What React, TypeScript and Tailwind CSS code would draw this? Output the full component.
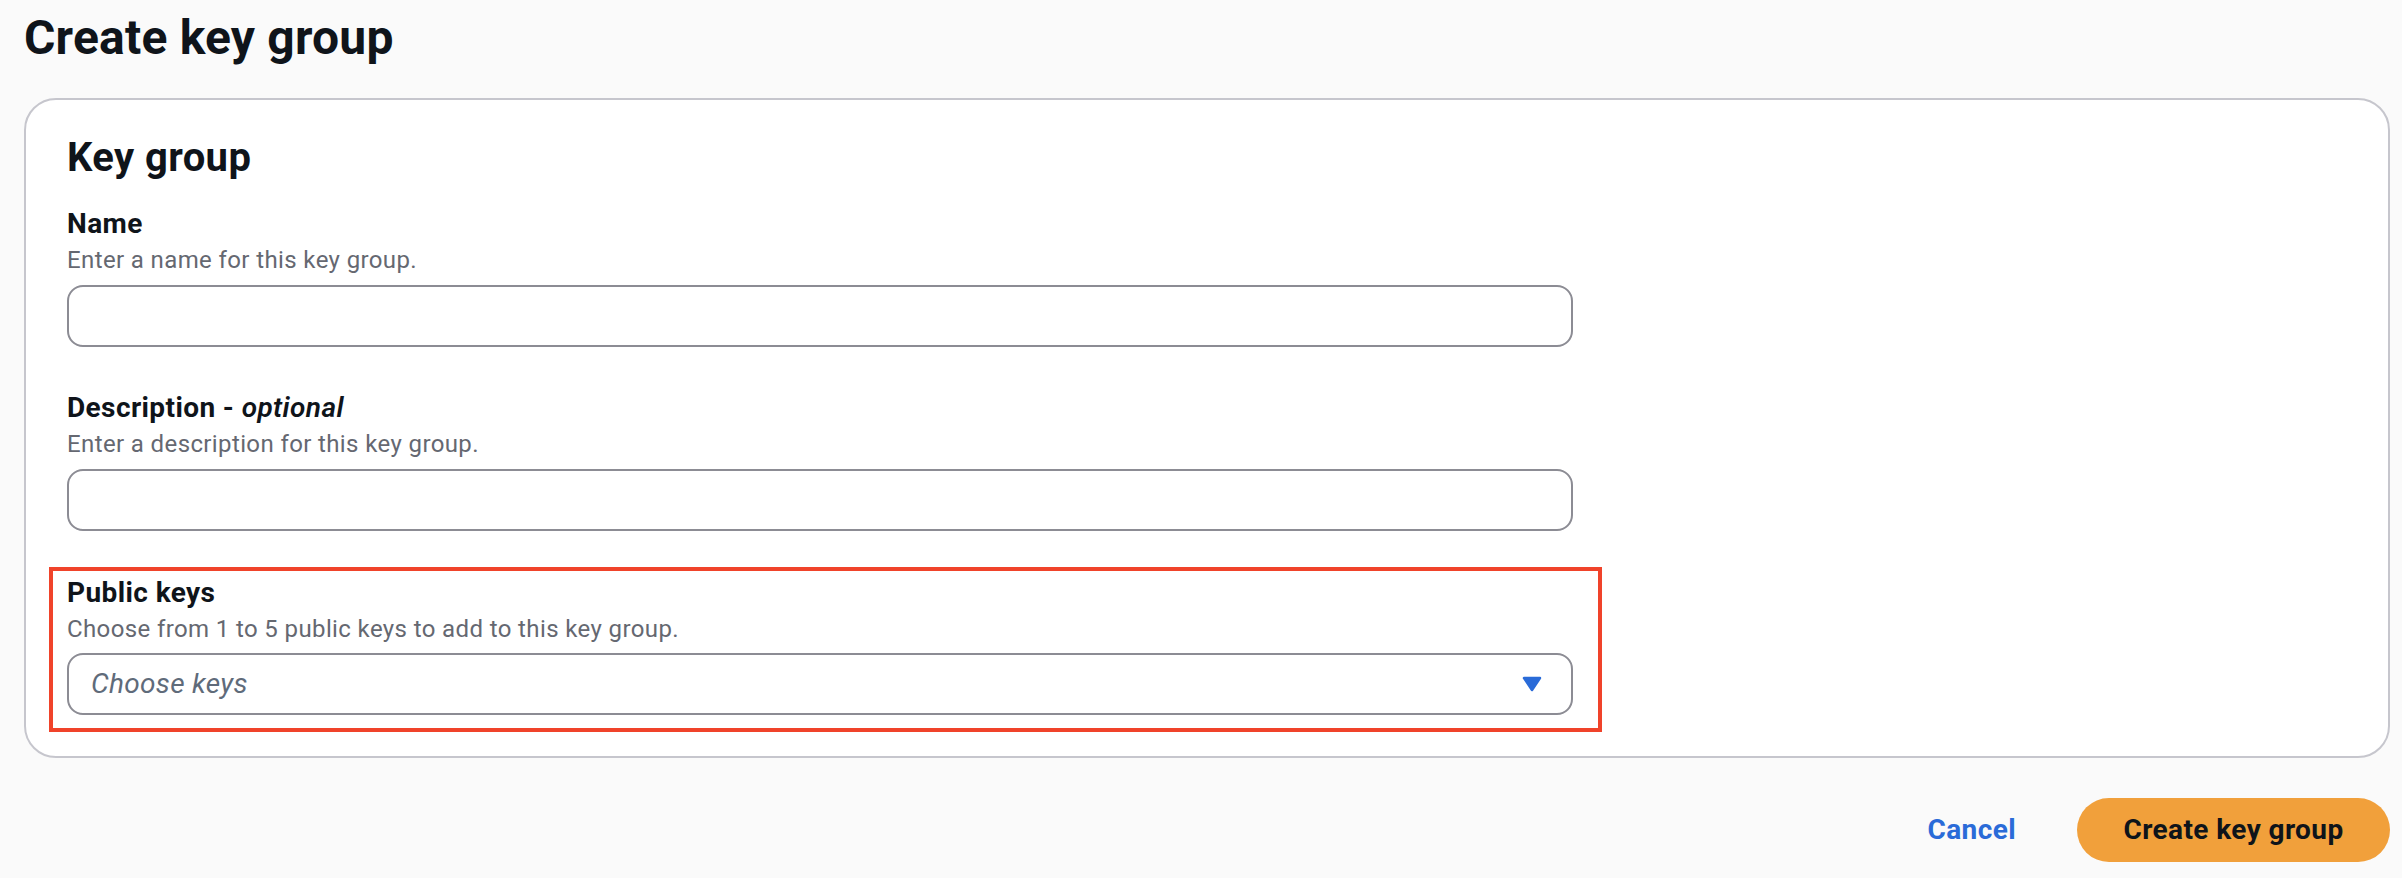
import React from "react";

const font = { fontFamily: "Roboto, 'Liberation Sans', sans-serif" };

function Field({
  label,
  optional,
  description,
  children,
  className,
}: {
  label: string;
  optional?: boolean;
  description: string;
  children: React.ReactNode;
  className?: string;
}) {
  return (
    <div className={className}>
      <div className="text-[28px] font-bold leading-[40px] tracking-[0.4px] text-[#0f141a]">
        {label}
        {optional && (
          <>
            {" - "}
            <i className="font-semibold">optional</i>
          </>
        )}
      </div>
      <div className="text-[24px] leading-[32px] tracking-[0.38px] text-[#656871]">{description}</div>
      {children}
    </div>
  );
}

function TextInput() {
  return (
    <input
      type="text"
      className="mt-[9px] block h-[62px] w-[1506px] rounded-[16px] border-2 border-[#8c8c94] bg-white px-[22px] text-[28px] outline-none"
    />
  );
}

export default function App() {
  return (
    <div
      style={font}
      className="min-h-[878px] w-[2402px] bg-[#fafafa] pl-[24px] pr-[12px] pt-[8px]"
    >
      <h1 className="text-[48px] font-bold leading-[60px] tracking-[0.2px] text-[#0f141a]">Create key group</h1>

      {/* Key group container */}
      <div className="mt-[30px] rounded-[32px] border-2 border-[#c6c6cd] bg-white px-[41px] pb-[41px] pt-[34px]">
        <h2 className="text-[40px] font-bold leading-[48px] tracking-[0.4px] text-[#0f141a]">Key group</h2>

        <Field className="mt-[22px]" label="Name" description="Enter a name for this key group.">
          <TextInput />
        </Field>

        <Field
          className="mt-[41px]"
          label="Description"
          optional
          description="Enter a description for this key group."
        >
          <TextInput />
        </Field>

        <Field
          className="relative mt-[42px] w-[1506px]"
          label="Public keys"
          description="Choose from 1 to 5 public keys to add to this key group."
        >
          <button
            type="button"
            className="mt-[8px] flex h-[62px] w-[1506px] items-center justify-between rounded-[16px] border-2 border-[#8c8c94] bg-white pl-[22px] pr-[29px]"
          >
            <span className="text-[28px] italic tracking-[0.3px] text-[#5f6b7a]">Choose keys</span>
            <svg width="20" height="16" viewBox="0 0 20 16" aria-hidden="true">
              <path
                d="M2 2 H18 L10 14 Z"
                fill="#2a6bd8"
                stroke="#2a6bd8"
                strokeWidth="2.5"
                strokeLinejoin="round"
              />
            </svg>
          </button>
          {/* highlight annotation */}
          <div className="pointer-events-none absolute bottom-[-17px] left-[-18px] right-[-29px] top-[-6px] border-4 border-[#f0432a]" />
        </Field>
      </div>

      {/* Footer actions */}
      <div className="mt-[40px] flex items-center justify-end gap-[61px]">
        <a href="#" className="text-[28px] font-bold leading-[40px] tracking-[0.4px] text-[#2a6bd8]">
          Cancel
        </a>
        <button
          type="button"
          className="flex h-[64px] w-[313px] items-center justify-center rounded-full bg-[#f1a03b] text-[28px] font-bold tracking-[0.4px] text-[#0f141a]"
        >
          Create key group
        </button>
      </div>
    </div>
  );
}
